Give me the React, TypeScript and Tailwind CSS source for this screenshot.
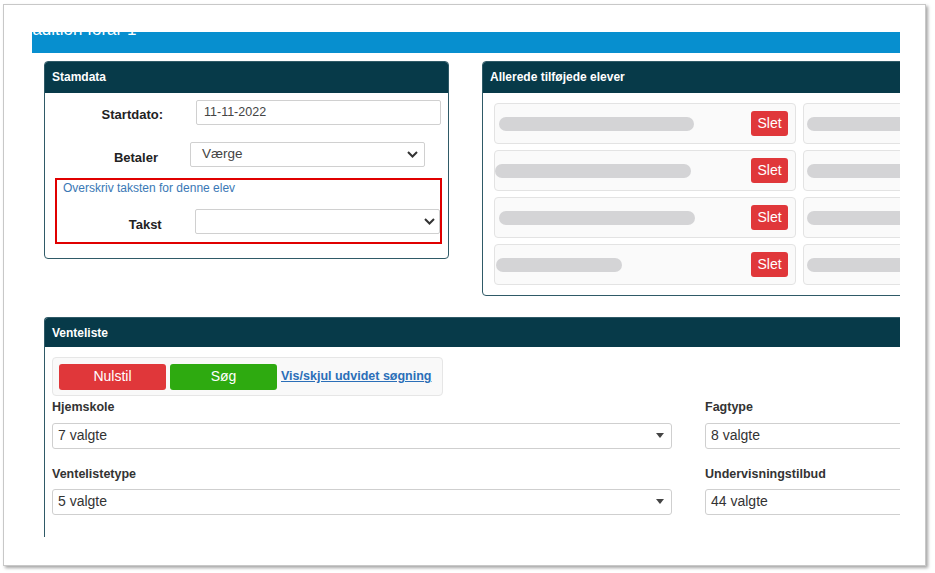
import React from "react";

const font = { fontFamily: '"Liberation Sans", Arial, sans-serif' };

function Caret() {
  return (
    <svg width="8" height="5" viewBox="0 0 8 5" className="shrink-0">
      <path d="M0 0h8L4 5z" fill="#444" />
    </svg>
  );
}

function Chevron() {
  return (
    <svg width="11" height="7" viewBox="0 0 11 7" className="shrink-0">
      <path d="M1 1l4.5 4.5L10 1" fill="none" stroke="#333" strokeWidth="2" />
    </svg>
  );
}

function Panel({ title, className, children }: { title: string; className?: string; children: React.ReactNode }) {
  return (
    <div className={"shrink-0 rounded-[4px] border border-[#2f5a67] bg-white " + (className ?? "")}>
      <div className="flex h-[31px] items-center rounded-t-[3px] bg-[#073a49] px-[7px] pb-[2px] text-[12px] font-bold text-white">
        {title}
      </div>
      {children}
    </div>
  );
}

function Scribble({ w, ml = 5 }: { w: number; ml?: number }) {
  return <div className="h-[14px] shrink-0 rounded-full bg-[#d4d4d6]" style={{ width: w, marginLeft: ml }} />;
}

function StudentCard({ w, ml }: { w: number; ml?: number }) {
  return (
    <div className="flex h-[41px] w-[302px] shrink-0 items-center justify-between rounded-[4px] border border-[#e3e3e3] bg-[#fafafa] pr-[7px]">
      <Scribble w={w} ml={ml} />
      <button className="flex h-[25px] w-[37px] items-center justify-center rounded-[3px] bg-[#e0373a] text-[14px] text-white">
        Slet
      </button>
    </div>
  );
}

function SideCard() {
  return (
    <div className="flex h-[41px] w-[120px] shrink-0 items-center rounded-[4px] border border-[#e3e3e3] bg-[#fafafa]">
      <Scribble w={120} ml={3} />
    </div>
  );
}

function MultiSelect({ value, w }: { value: string; w: number }) {
  return (
    <div
      className="flex h-[26px] items-center justify-between rounded-[3px] border border-[#cfcfcf] bg-white pl-[5px] pr-[7px] text-[14px] text-[#333]"
      style={{ width: w }}
    >
      <span>{value}</span>
      <Caret />
    </div>
  );
}

export default function App() {
  return (
    <div className="relative h-[573px] w-[935px] overflow-hidden bg-white" style={font}>
      <div className="ml-[3px] mt-[4px] h-[562px] w-[923px] border border-[#c8c8c8] bg-white shadow-[2px_2px_3px_rgba(0,0,0,0.35)]">
        <div className="ml-[28px] mt-[27px] h-[505px] w-[868px] overflow-hidden">
          {/* blue title bar, top clipped */}
          <div className="h-[21px] overflow-hidden bg-[#078fcf]">
            <div className="-ml-[15px] -mt-[12px] whitespace-nowrap text-[17px] leading-[20px] text-white">
              Tradition forår 1
            </div>
          </div>

          <div className="flex items-start gap-[33px] pl-[12px] pt-[8px]">
            {/* Stamdata */}
            <Panel title="Stamdata" className="w-[405px]">
              <div className="pb-[14px] pt-[7px] text-[#222]">
                <div className="flex items-center">
                  <div className="w-[118px] pt-[5px] text-right text-[13px] font-bold">Startdato:</div>
                  <div className="ml-[33px] flex h-[25px] w-[245px] items-center rounded-[2px] border border-[#d0d0d0] pl-[7px] text-[12.5px] text-[#444]">
                    11-11-2022
                  </div>
                </div>
                <div className="mt-[17px] flex items-center">
                  <div className="w-[113px] pt-[6px] text-right text-[13px] font-bold">Betaler</div>
                  <div className="ml-[32px] flex h-[25px] w-[235px] items-center justify-between rounded-[2px] border border-[#d0d0d0] pl-[11px] pr-[6px] text-[13.5px] text-[#444]">
                    <span className="-mt-[1px]">Værge</span>
                    <Chevron />
                  </div>
                </div>
                <div className="ml-[10px] mt-[10px] h-[66px] w-[387px] border-2 border-[#e00000] pl-[6px]">
                  <div className="-mt-[1px] text-[12px] text-[#3a78b5]">Overskriv taksten for denne elev</div>
                  <div className="mt-[12px] flex items-center">
                    <div className="w-[99px] pt-[6px] text-right text-[13px] font-bold">Takst</div>
                    <div className="ml-[33px] flex h-[25px] w-[246px] items-center justify-end rounded-[2px] border border-[#d0d0d0] pr-[4px]">
                      <Chevron />
                    </div>
                  </div>
                </div>
              </div>
            </Panel>

            {/* Allerede tilføjede elever */}
            <Panel title="Allerede tilføjede elever" className="w-[460px]">
              <div className="flex flex-col gap-[6px] px-[11px] py-[10px]">
                <div className="flex gap-[7px]">
                  <StudentCard w={195} ml={4} />
                  <SideCard />
                </div>
                <div className="flex gap-[7px]">
                  <StudentCard w={196} ml={0} />
                  <SideCard />
                </div>
                <div className="flex gap-[7px]">
                  <StudentCard w={196} ml={4} />
                  <SideCard />
                </div>
                <div className="flex gap-[7px]">
                  <StudentCard w={126} ml={1} />
                  <SideCard />
                </div>
              </div>
            </Panel>
          </div>

          {/* Venteliste */}
          <div className="ml-[12px] mt-[21px] w-[880px] rounded-t-[4px] border-l border-t border-[#2f5a67]">
            <div className="flex h-[29px] items-center rounded-tl-[3px] bg-[#073a49] px-[7px] text-[12px] font-bold text-white">
              Venteliste
            </div>
            <div className="h-[200px] pl-[7px] pt-[10px]">
              <div className="flex h-[39px] w-[391px] items-center gap-[4px] rounded-[4px] border border-[#e6e6e6] bg-[#f9f9f9] px-[6px]">
                <button className="h-[26px] w-[107px] shrink-0 rounded-[3px] bg-[#e0373a] text-[14px] text-white">Nulstil</button>
                <button className="h-[26px] w-[107px] shrink-0 rounded-[3px] bg-[#2eaa10] text-[14px] text-white">Søg</button>
                <a className="whitespace-nowrap text-[12.5px] font-bold text-[#2b6fb8] underline">Vis/skjul udvidet søgning</a>
              </div>
              <div className="flex gap-[33px]">
                <div className="flex flex-col">
                  <div className="mt-[2px] text-[12.5px] font-bold text-[#333]">Hjemskole</div>
                  <div className="mt-[6px]">
                    <MultiSelect value="7 valgte" w={620} />
                  </div>
                  <div className="mt-[16px] text-[12.5px] font-bold text-[#333]">Ventelistetype</div>
                  <div className="mt-[5px]">
                    <MultiSelect value="5 valgte" w={620} />
                  </div>
                </div>
                <div className="flex flex-col">
                  <div className="mt-[2px] text-[12.5px] font-bold text-[#333]">Fagtype</div>
                  <div className="mt-[6px]">
                    <MultiSelect value="8 valgte" w={220} />
                  </div>
                  <div className="mt-[16px] text-[12.5px] font-bold text-[#333]">Undervisningstilbud</div>
                  <div className="mt-[5px]">
                    <MultiSelect value="44 valgte" w={220} />
                  </div>
                </div>
              </div>
            </div>
          </div>
        </div>
      </div>
    </div>
  );
}
